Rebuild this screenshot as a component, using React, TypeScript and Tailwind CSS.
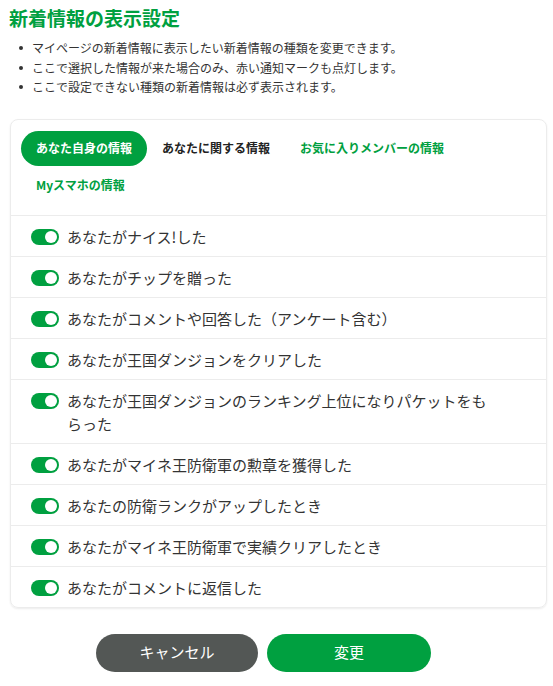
import React from "react";

const items = [
  "あなたがナイス!した",
  "あなたがチップを贈った",
  "あなたがコメントや回答した（アンケート含む）",
  "あなたが王国ダンジョンをクリアした",
  "あなたが王国ダンジョンのランキング上位になりパケットをもらった",
  "あなたがマイネ王防衛軍の勲章を獲得した",
  "あなたの防衛ランクがアップしたとき",
  "あなたがマイネ王防衛軍で実績クリアしたとき",
  "あなたがコメントに返信した",
];

function Toggle() {
  return (
    <span className="mt-[4px] flex h-[16px] w-[28px] shrink-0 items-center justify-end rounded-full bg-[#00a040] pr-[2px]">
      <span className="h-[12px] w-[12px] rounded-full bg-white" />
    </span>
  );
}

export default function App() {
  return (
    <div
      className="min-h-[686px] bg-white px-[10px] pt-[4px] text-[#333]"
      style={{ fontFamily: '"Noto Sans CJK JP", "Noto Sans", sans-serif' }}
    >
      <h1 className="ml-[-1px] text-[19px] font-bold leading-[28px] text-[#00a040]">新着情報の表示設定</h1>
      <ul className="mt-[6px] pl-[9px] text-[12px] leading-[19.5px]">
        <li className="flex items-start gap-[9px]">
          <span className="mt-[8px] h-[4px] w-[4px] shrink-0 rounded-full bg-[#333]" />
          マイページの新着情報に表示したい新着情報の種類を変更できます。
        </li>
        <li className="flex items-start gap-[9px]">
          <span className="mt-[8px] h-[4px] w-[4px] shrink-0 rounded-full bg-[#333]" />
          ここで選択した情報が来た場合のみ、赤い通知マークも点灯します。
        </li>
        <li className="flex items-start gap-[9px]">
          <span className="mt-[8px] h-[4px] w-[4px] shrink-0 rounded-full bg-[#333]" />
          ここで設定できない種類の新着情報は必ず表示されます。
        </li>
      </ul>

      <div className="mt-[22px] w-[537px] rounded-[8px] border border-[#ececec] shadow-[0_1px_2px_rgba(0,0,0,0.08)]">
        <div className="flex flex-wrap items-center gap-y-[2px] px-[10px] pt-[11px] pb-[12px] text-[12px] font-bold">
          <span className="flex h-[35px] items-center rounded-full bg-[#00a040] px-[15px] text-white">
            あなた自身の情報
          </span>
          <span className="flex h-[35px] items-center px-[15px] text-[#222]">あなたに関する情報</span>
          <span className="flex h-[35px] items-center px-[15px] text-[#00a040]">お気に入りメンバーの情報</span>
          <span className="flex h-[35px] items-center px-[15px] text-[#00a040]">Myスマホの情報</span>
        </div>
        {items.map((t) => (
          <div
            key={t}
            className="flex items-start gap-[8px] border-t border-[#ececec] pt-[9px] pb-[8px] pr-[52px] pl-[20px] text-[15px] leading-[23px]"
          >
            <Toggle />
            <span>{t}</span>
          </div>
        ))}
      </div>

      <div className="mt-[26px] ml-[86px] flex gap-[9px]">
        <button className="h-[38px] w-[162px] rounded-full bg-[#535755] text-[15px] text-white">キャンセル</button>
        <button className="h-[38px] w-[164px] rounded-full bg-[#00a040] text-[15px] text-white">変更</button>
      </div>
    </div>
  );
}
